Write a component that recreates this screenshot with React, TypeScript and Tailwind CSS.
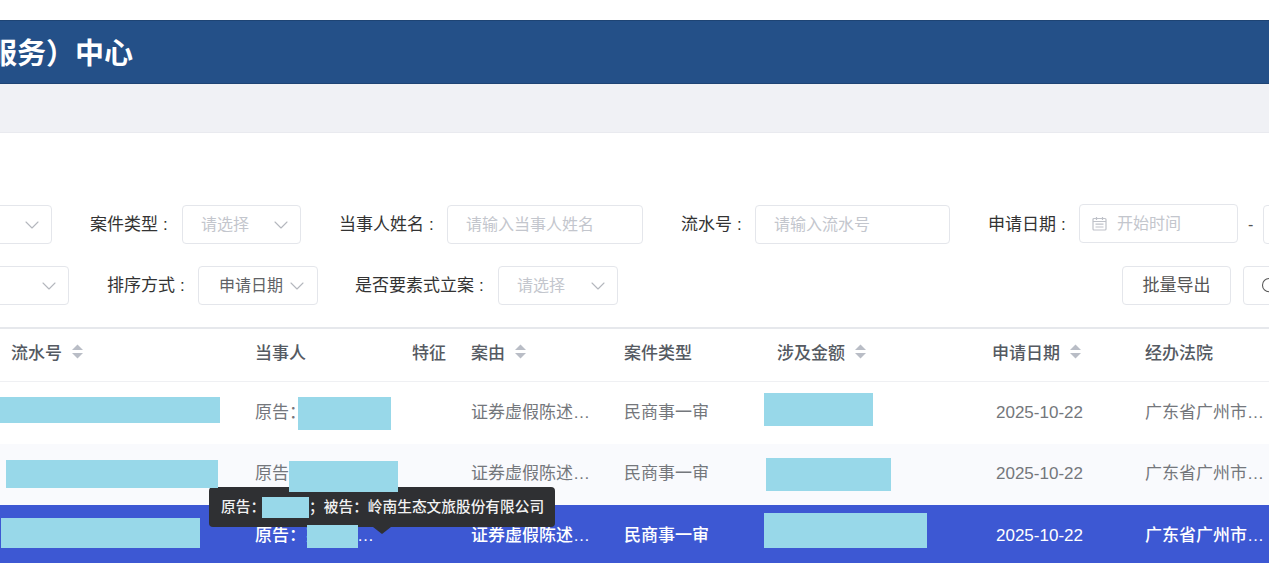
import { ChevronDown, Search } from "lucide-react";

const rowText = {
  party: "原告：某某某某某；被告：岭南生态文旅股份有限公司",
  cause: "证券虚假陈述责任纠纷",
  type: "民商事一审",
  date: "2025-10-22",
  court: "广东省广州市中级人民法院",
};

function SortIcon() {
  return (
    <svg width="13" height="15" viewBox="0 0 13 15" className="shrink-0 ml-[9px] text-[#b9bdc6]" fill="currentColor">
      <path d="M6.5 0.5 12 6H1z" />
      <path d="M6.5 14.5 1 9h11z" />
    </svg>
  );
}

function CalendarIcon() {
  return (
    <svg width="15" height="15" viewBox="0 0 15 15" className="shrink-0 mr-[10px] text-[#bfc2c9]" fill="none" stroke="currentColor" strokeWidth="1.2">
      <rect x="1" y="2.5" width="13" height="11.5" rx="1" />
      <path d="M4.5 1v3M10.5 1v3M1 5.5h13M3.5 8.2h8M3.5 11h8" />
    </svg>
  );
}

function Select({ width, text, value }: { width: string; text: string; value?: boolean }) {
  return (
    <div className={`${width} h-[39px] shrink-0 flex items-center justify-between pl-[18px] pr-[7px] bg-white border border-[#e4e6eb] rounded-[4px]`}>
      <span className={value ? "text-[#606266]" : "text-[#c3c6cd]"}>{text}</span>
      <ChevronDown size={24} strokeWidth={1.1} className="text-[#b4b7bd]" />
    </div>
  );
}

function Field({ label, labelWidth, children }: { label: string; labelWidth: string; children: React.ReactNode }) {
  return (
    <div className="flex items-center shrink-0">
      <span className={`${labelWidth} shrink-0 whitespace-nowrap text-[17px] text-[#333]`}>
        {label}
        <span className="ml-[5px]">:</span>
      </span>
      {children}
    </div>
  );
}

function TextInput({ width, placeholder }: { width: string; placeholder: string }) {
  return (
    <div className={`${width} h-[39px] shrink-0 flex items-center pl-[18px] bg-white border border-[#e4e6eb] rounded-[4px] text-[#c3c6cd]`}>
      {placeholder}
    </div>
  );
}

function Redact({ className }: { className: string }) {
  return <div className={`absolute bg-[#98d8e9] z-20 ${className}`} />;
}

function Row({ className, textClass, children }: { className: string; textClass: string; children: React.ReactNode }) {
  return (
    <div className={`relative grid grid-cols-[255px_157px_59px_153px_153px_215px_153px_124px] items-center text-[17px] ${className} ${textClass}`}>
      <div />
      <div className="w-[120px] truncate">{rowText.party}</div>
      <div />
      <div className="w-[120px] truncate">{rowText.cause}</div>
      <div>{rowText.type}</div>
      <div />
      <div className="pl-[4px]">{rowText.date}</div>
      <div className="w-[120px] truncate">{rowText.court}</div>
      {children}
    </div>
  );
}

export default function App() {
  return (
    <div className="w-[1269px] h-[563px] overflow-hidden bg-white text-[16px] font-['Liberation_Sans','Noto_Sans_CJK_SC',sans-serif]">
      <div className="h-5" />
      <header className="h-[64px] bg-[#245088] border-y border-[#1e4474] flex items-center text-white text-[29px] font-bold whitespace-nowrap">
        <span className="-ml-[12px] font-['Noto_Sans_CJK_SC',sans-serif]">服务）中心</span>
      </header>
      <div className="h-[49px] bg-[#f0f1f5] border-b border-[#e9eaef]" />

      <div className="pt-[72px]">
        <div className="flex items-center -ml-[68px]">
          <Select width="w-[120px]" text="" />
          <div className="ml-[38px]">
            <Field label="案件类型" labelWidth="w-[92px]">
              <Select width="w-[119px]" text="请选择" />
            </Field>
          </div>
          <div className="ml-[38px]">
            <Field label="当事人姓名" labelWidth="w-[108px]">
              <TextInput width="w-[196px]" placeholder="请输入当事人姓名" />
            </Field>
          </div>
          <div className="ml-[38px]">
            <Field label="流水号" labelWidth="w-[74px]">
              <TextInput width="w-[195px]" placeholder="请输入流水号" />
            </Field>
          </div>
          <div className="ml-[38px]">
            <Field label="申请日期" labelWidth="w-[91px]">
              <div className="w-[159px] h-[39px] -mt-[2px] shrink-0 flex items-center pl-[12px] border border-[#e4e6eb] rounded-[4px] text-[#c3c6cd]">
                <CalendarIcon />
                开始时间
              </div>
            </Field>
          </div>
          <span className="ml-[10px] mr-[10px] text-[#555]">-</span>
          <div className="w-[159px] h-[39px] shrink-0 border border-[#e4e6eb] rounded-[4px]" />
        </div>

        <div className="flex items-center mt-[22px] -ml-[51px]">
          <Select width="w-[120px]" text="" />
          <div className="ml-[38px]">
            <Field label="排序方式" labelWidth="w-[91px]">
              <div className="w-[120px] h-[39px] shrink-0 flex items-center justify-between pl-[20px] pr-[8px] border border-[#e4e6eb] rounded-[4px] text-[#606266]">
                申请日期
                <ChevronDown size={24} strokeWidth={1.1} className="text-[#b4b7bd] -ml-[4px]" />
              </div>
            </Field>
          </div>
          <div className="ml-[37px]">
            <Field label="是否要素式立案" labelWidth="w-[143px]">
              <Select width="w-[120px]" text="请选择" />
            </Field>
          </div>
          <button className="ml-[504px] w-[109px] h-[39px] shrink-0 border border-[#e4e6eb] rounded-[4px] text-[17px] text-[#555]">批量导出</button>
          <button className="ml-[12px] w-[109px] h-[39px] shrink-0 flex items-center pl-[16px] border border-[#e4e6eb] rounded-[4px] text-[#555]">
            <Search size={20} strokeWidth={1.3} />
          </button>
        </div>
      </div>

      <div className="relative mt-[22px] border-t-2 border-[#e6e8ec]">
        <div className="grid grid-cols-[255px_157px_59px_153px_153px_215px_153px_124px] items-center h-[53px] pb-[7px] border-b border-[#eff0f3] text-[17px] font-medium text-[#555a62] font-['Noto_Sans_CJK_SC',sans-serif]">
          <div className="flex items-center pl-[11px]">流水号<SortIcon /></div>
          <div>当事人</div>
          <div>特征</div>
          <div className="flex items-center">案由<SortIcon /></div>
          <div>案件类型</div>
          <div className="flex items-center">涉及金额<SortIcon /></div>
          <div className="flex items-center">申请日期<SortIcon /></div>
          <div>经办法院</div>
        </div>

        <Row className="h-[62px]" textClass="text-[#74777c]">
          <Redact className="left-0 top-[15px] w-[220px] h-[26px]" />
          <Redact className="left-[298px] top-[15px] w-[93px] h-[33px]" />
          <Redact className="left-[764px] top-[11px] w-[109px] h-[33px]" />
        </Row>
        <Row className="h-[61px] pb-[2px] bg-[#f9fafd]" textClass="text-[#74777c]">
          <Redact className="left-[6px] top-[16px] w-[212px] h-[28px]" />
          <Redact className="left-[289px] top-[17px] w-[109px] h-[31px]" />
          <Redact className="left-[766px] top-[14px] w-[125px] h-[33px]" />
        </Row>
        <Row className="h-[61px] bg-[#3d58d3]" textClass="text-white font-medium">
          <Redact className="left-[1px] top-[13px] w-[199px] h-[30px]" />
          <Redact className="left-[307px] top-[20px] w-[51px] h-[23px]" />
          <Redact className="left-[764px] top-[8px] w-[163px] h-[35px]" />
        </Row>

        <div className="absolute left-[209px] top-[158px] z-10 w-[346px] h-[40px] flex items-center pl-[12px] rounded-[4px] bg-[#2f3033] text-[14.7px] font-medium text-[#f2f2f2] whitespace-nowrap">
          原告：
          <span className="ml-[-3px] w-[47px] h-[21px] bg-[#98d8e9]" />
          ；被告：岭南生态文旅股份有限公司
          <span className="absolute left-[164px] top-[40px] w-0 h-0 border-x-[9px] border-x-transparent border-t-[7px] border-t-[#2f3033]" />
        </div>
      </div>
    </div>
  );
}
